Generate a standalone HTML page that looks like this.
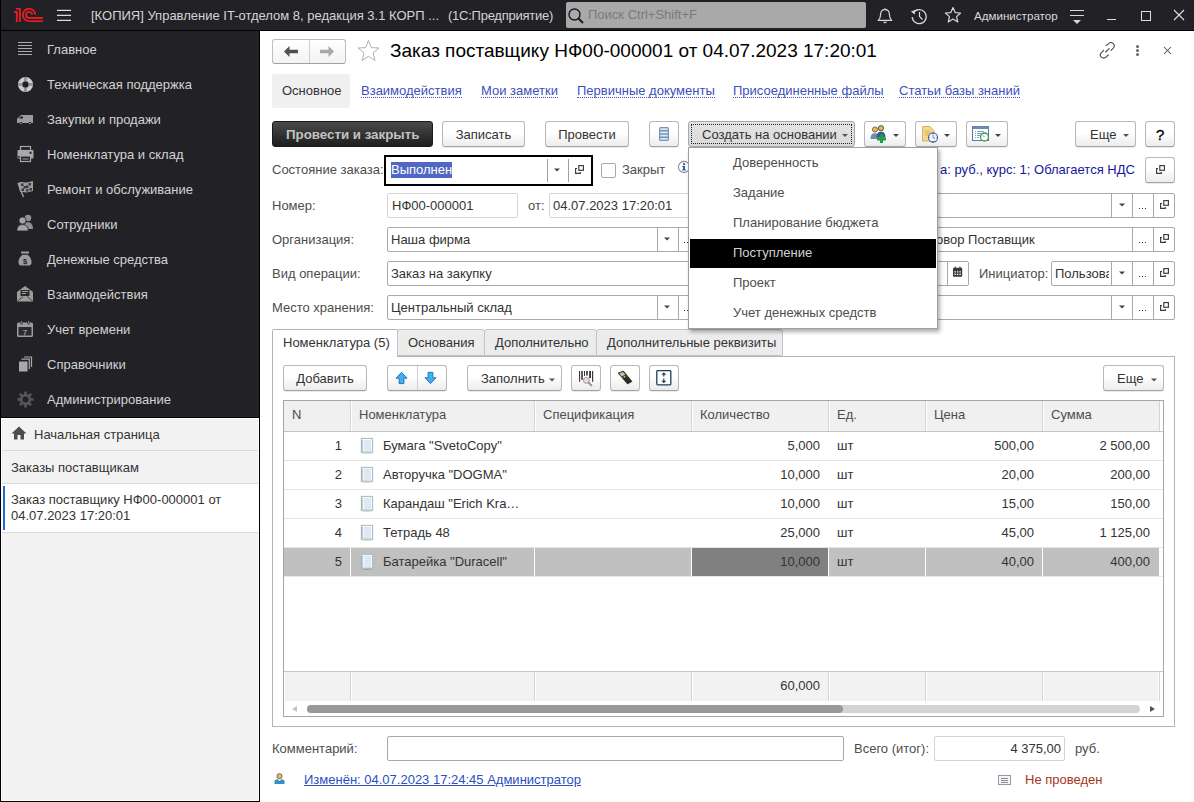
<!DOCTYPE html>
<html><head><meta charset="utf-8">
<style>
*{box-sizing:border-box;margin:0;padding:0}
html,body{width:1194px;height:802px;overflow:hidden;background:#fff;font-family:"Liberation Sans",sans-serif;font-size:13px;color:#333}
.a{position:absolute}
.t{position:absolute;white-space:nowrap;line-height:16px}
#top{left:0;top:0;width:1194px;height:30px;background:#222226}
#nav{left:0;top:31px;width:259px;height:386px;background:#222226}
.ni{position:absolute;left:47px;color:#d2d2d2;font-size:13px;white-space:nowrap;line-height:16px}
.lnk{display:inline-block;height:15px;color:#3b4fbd;border-bottom:1px dotted #3b4fbd}
.btn{position:absolute;height:26px;border:1px solid #b8b8b8;border-bottom-color:#a2a2a2;border-radius:3px;background:linear-gradient(#fff 45%,#ececec);box-shadow:0 1px 0 rgba(0,0,0,.08);color:#333;text-align:center;line-height:25px;white-space:nowrap}
.fld{position:absolute;height:24px;border:1px solid #a9a9a9;border-radius:2px;background:#fff}
.lbl{position:absolute;color:#4d4d4d;white-space:nowrap;line-height:16px}
</style></head><body>
<!-- frame -->
<div id="top" class="a"></div>
<div class="a" style="left:0;top:30px;width:1194px;height:1px;background:#000"></div>
<div id="nav" class="a"></div>
<div class="a" style="left:0;top:0;width:1px;height:802px;background:#000"></div>
<div class="a" style="left:259px;top:31px;width:1px;height:771px;background:#000"></div>
<div class="a" style="left:0;top:417px;width:260px;height:1px;background:#000"></div>
<div class="a" style="left:0;top:801px;width:260px;height:1px;background:#000"></div>
<div class="a" style="left:1px;top:418px;width:258px;height:383px;background:#fff"></div>
<div class="a" style="left:2px;top:419px;width:256px;height:381px;background:#f2f2f2"></div>

<!-- top bar content -->
<svg class="a" style="left:0;top:0" width="50" height="30" viewBox="0 0 50 30">
 <g fill="none" stroke="#e31b23" stroke-width="1.9" stroke-linejoin="miter" stroke-linecap="butt">
  <path d="M14 11.95 H16.85 V22.1"/>
  <path d="M15.9 8.85 H19.9 V22.1"/>
  <path d="M35.25 14.6 A6.2 6.2 0 1 0 29.05 21.15 H43"/>
  <path d="M32.1 14.6 A3.05 3.05 0 1 0 29.05 17.95 H43"/>
 </g>
</svg>
<svg class="a" style="left:0;top:0" width="80" height="30" viewBox="0 0 80 30"><path d="M57 10.4 H71 M57 15.35 H71 M57 20.35 H71" stroke="#dcdcdc" stroke-width="1.4"/></svg>
<div class="t" style="left:91px;top:8px;color:#d4d4d4;font-size:13px">[КОПИЯ] Управление IT-отделом 8, редакция 3.1 КОРП ...</div><div class="t" style="left:448px;top:8px;color:#d4d4d4;font-size:13px;letter-spacing:-0.25px">(1С:Предприятие)</div>
<div class="a" style="left:566px;top:2px;width:300px;height:26px;background:#a9a9a9;border-radius:2px"></div>
<svg class="a" style="left:568px;top:8px" width="17" height="16" viewBox="0 0 17 16"><circle cx="6.5" cy="6.5" r="5.5" fill="none" stroke="#1a1a1a" stroke-width="1.4"/><path d="M10.5 10.5 L15 15" stroke="#1a1a1a" stroke-width="2"/></svg>
<div class="t" style="left:588px;top:7px;color:#7a7a7a;font-size:13px">Поиск Ctrl+Shift+F</div>
<!-- bell -->
<svg class="a" style="left:876px;top:7px" width="18" height="18" viewBox="0 0 18 18"><path d="M9 1.2 V2.4" stroke="#d8d8d8" stroke-width="1.2"/><path d="M2.2 13.4 C3.8 12 4.6 10.8 4.6 7.6 C4.6 4.4 6.4 2.6 9 2.6 C11.6 2.6 13.4 4.4 13.4 7.6 C13.4 10.8 14.2 12 15.8 13.4 Z" fill="none" stroke="#d8d8d8" stroke-width="1.2" stroke-linejoin="round"/><path d="M6.6 14.8 H11.4 L9 16.4 Z" fill="#d8d8d8"/></svg>
<!-- history -->
<svg class="a" style="left:910px;top:7px" width="18" height="18" viewBox="0 0 18 18"><path d="M3.2 6 A7 7 0 1 1 2.2 10" fill="none" stroke="#d8d8d8" stroke-width="1.3"/><path d="M0.8 4.5 L4.8 7.5 L5.2 3 Z" fill="#d8d8d8"/><path d="M9.5 5 V9.5 L12.5 12.5" fill="none" stroke="#d8d8d8" stroke-width="1.2"/></svg>
<!-- star -->
<svg class="a" style="left:944px;top:6px" width="18" height="18" viewBox="0 0 18 18"><path d="M9 1.5 L11.2 6.6 L16.6 7 L12.5 10.6 L13.8 16 L9 13.1 L4.2 16 L5.5 10.6 L1.4 7 L6.8 6.6 Z" fill="none" stroke="#d8d8d8" stroke-width="1.2" stroke-linejoin="round"/></svg>
<div class="t" style="left:974px;top:8px;color:#d8d8d8;font-size:11.6px">Администратор</div>
<div class="a" style="left:1070px;top:10px;width:14px;height:1px;background:#d8d8d8"></div>
<div class="a" style="left:1070px;top:15px;width:14px;height:1px;background:#d8d8d8"></div>
<svg class="a" style="left:1073px;top:20px" width="8" height="4" viewBox="0 0 8 4"><path d="M0 0 H8 L4 4 Z" fill="#d8d8d8"/></svg>
<div class="a" style="left:1107px;top:19px;width:9px;height:1px;background:#e0e0e0"></div>
<div class="a" style="left:1141px;top:11px;width:10px;height:10px;border:1px solid #e0e0e0"></div>
<svg class="a" style="left:1173px;top:9px" width="12" height="12" viewBox="0 0 12 12"><path d="M1 1 L11 11 M11 1 L1 11" stroke="#e0e0e0" stroke-width="1.1"/></svg>

<!-- nav items -->
<div class="ni" style="top:42px">Главное</div>
<div class="ni" style="top:77px">Техническая поддержка</div>
<div class="ni" style="top:112px">Закупки и продажи</div>
<div class="ni" style="top:147px">Номенклатура и склад</div>
<div class="ni" style="top:182px">Ремонт и обслуживание</div>
<div class="ni" style="top:217px">Сотрудники</div>
<div class="ni" style="top:252px">Денежные средства</div>
<div class="ni" style="top:287px">Взаимодействия</div>
<div class="ni" style="top:322px">Учет времени</div>
<div class="ni" style="top:357px">Справочники</div>
<div class="ni" style="top:392px">Администрирование</div>

<!-- nav icons -->
<svg class="a" style="left:17px;top:41px" width="16" height="15" viewBox="0 0 16 15"><path d="M1 1.5 H15 M1 4.5 H15 M1 7.5 H15 M1 10.5 H15 M1 13.5 H15" stroke="#ababab" stroke-width="1"/></svg>
<svg class="a" style="left:17px;top:76px" width="17" height="17" viewBox="0 0 17 17"><circle cx="8.5" cy="8.5" r="5.4" fill="none" stroke="#cdcdcd" stroke-width="4.4"/><path d="M7 1 H10 V5 H7 Z M7 12 H10 V16 H7 Z M1 7 H5 V10 H1 Z M12 7 H16 V10 H12 Z" fill="#959595"/></svg>
<svg class="a" style="left:16px;top:113px" width="18" height="12" viewBox="0 0 18 12"><path d="M1 6 L5 2 H17 V10 H1 Z" fill="#9c9c9c"/><path d="M4.5 3.5 H7 V5.5 H3 Z" fill="#222226"/><circle cx="5" cy="10.5" r="1.4" fill="#222226"/><circle cx="14" cy="10.5" r="1.4" fill="#222226"/><circle cx="5" cy="10.5" r="0.8" fill="#9c9c9c"/><circle cx="14" cy="10.5" r="0.8" fill="#9c9c9c"/></svg>
<svg class="a" style="left:17px;top:145px" width="17" height="18" viewBox="0 0 17 18"><rect x="3.5" y="1.5" width="10" height="4" fill="none" stroke="#a8a8a8" stroke-width="1.2"/><rect x="0.5" y="5" width="16" height="8.5" rx="1" fill="#a8a8a8"/><rect x="3.5" y="11" width="10" height="5.5" fill="#222226" stroke="#a8a8a8" stroke-width="1.2"/><path d="M5.5 14 H11.5" stroke="#a8a8a8" stroke-width="1"/><rect x="12.5" y="6.8" width="2" height="2" fill="#222226"/><rect x="1.2" y="11" width="1.6" height="1.6" fill="#222226"/></svg>
<svg class="a" style="left:17px;top:180px" width="17" height="18" viewBox="0 0 17 18"><path d="M1 3 C4 1 6 2.5 9 2.5 C11 2.5 13 1.5 16 1 V11 C13 11.5 11 12.5 9 12.5 C6 12.5 4.5 11.5 3 12 Z" fill="#9c9c9c"/><path d="M1 3 L6.5 17" stroke="#9c9c9c" stroke-width="1.5"/><path d="M4 3.5 h2.5 v2.5 h-2.5 Z M9 5.5 h2.5 v2.5 h-2.5 Z M6.5 6 h2.5 v2.5 h-2.5 Z M4.5 8.5 h2.5 v2.5 h-2.5 Z M11.5 3 h2.5 v2.5 h-2.5 Z M9 9 h2.5 v2.5 h-2.5 Z M12.5 8 h2.5 v2.5 h-2.5 Z" fill="#3a3a3e"/></svg>
<svg class="a" style="left:16px;top:214px" width="18" height="18" viewBox="0 0 18 18"><circle cx="12" cy="4" r="3.3" fill="#8e8e8e"/><path d="M8 15 C8 10 9.5 8.3 12 8.3 C14.5 8.3 17 10 17 15 Z" fill="#8e8e8e"/><circle cx="6.5" cy="6.5" r="3.6" fill="#a4a4a4" stroke="#222226" stroke-width="0.8"/><path d="M0.8 17 C0.8 12.5 3 10.6 6.5 10.6 C10 10.6 12.2 12.5 12.2 17 Z" fill="#a4a4a4" stroke="#222226" stroke-width="0.8"/></svg>
<svg class="a" style="left:18px;top:251px" width="14" height="15" viewBox="0 0 14 15"><rect x="3" y="0.5" width="8" height="2" fill="#9c9c9c"/><path d="M4.5 3.8 H9.5 C13 6.5 13.5 9 13.5 11.5 C13.5 13.5 12.5 14.5 11 14.5 H3 C1.5 14.5 0.5 13.5 0.5 11.5 C0.5 9 1 6.5 4.5 3.8 Z" fill="#9c9c9c"/><text x="7" y="12.5" font-size="7.5" font-family="Liberation Sans" text-anchor="middle" fill="#222226" font-weight="bold">$</text></svg>
<svg class="a" style="left:16px;top:285px" width="18" height="18" viewBox="0 0 18 18"><path d="M1 7 L9 1 L17 7 V16.5 H1 Z" fill="#9c9c9c"/><rect x="4.5" y="5" width="9" height="6" fill="#2e2e32"/><path d="M6 6.5 H12 M6 8.5 H10" stroke="#9c9c9c" stroke-width="1"/><path d="M1.5 16 L7 11.5 M16.5 16 L11 11.5" stroke="#2e2e32" stroke-width="0.8"/></svg>
<svg class="a" style="left:16px;top:320px" width="18" height="18" viewBox="0 0 18 18"><rect x="1" y="2.5" width="16" height="14.5" rx="1.5" fill="#9c9c9c"/><rect x="2.5" y="7" width="13" height="8.5" fill="#2a2a2e"/><path d="M5.5 1 V4.5 M12.5 1 V4.5" stroke="#2a2a2e" stroke-width="1.8"/><path d="M5.5 1 V3.5 M12.5 1 V3.5" stroke="#9c9c9c" stroke-width="0.8"/><text x="9" y="14.8" font-size="8" font-family="Liberation Sans" text-anchor="middle" fill="#9c9c9c" font-weight="bold">7</text></svg>
<svg class="a" style="left:18px;top:356px" width="15" height="16" viewBox="0 0 15 16"><path d="M6 1 H13.5 V11" fill="none" stroke="#a8a8a8" stroke-width="1.2"/><path d="M3.5 3.2 H11.3 V13.3" fill="none" stroke="#a8a8a8" stroke-width="1.2"/><rect x="1" y="5.5" width="8.5" height="10" fill="#a8a8a8"/></svg>
<svg class="a" style="left:17px;top:391px" width="17" height="17" viewBox="0 0 17 17"><g fill="#585858"><circle cx="8.5" cy="8.5" r="5.5"/><rect x="7.2" y="0.5" width="2.6" height="16" rx="0.5"/><rect x="0.5" y="7.2" width="16" height="2.6" rx="0.5"/><rect x="7.2" y="0.5" width="2.6" height="16" rx="0.5" transform="rotate(45 8.5 8.5)"/><rect x="7.2" y="0.5" width="2.6" height="16" rx="0.5" transform="rotate(-45 8.5 8.5)"/></g><circle cx="8.5" cy="8.5" r="3" fill="#222226"/></svg>

<!-- lower left panel -->
<svg class="a" style="left:11px;top:426px" width="16" height="14" viewBox="0 0 16 14"><path d="M0.5 7.5 L8 0.5 L15.5 7.5 H13 V13.5 H9.5 V9 H6.5 V13.5 H3 V7.5 Z" fill="#4d4d4d"/></svg>
<div class="t" style="left:34px;top:427px;color:#333">Начальная страница</div>
<div class="a" style="left:2px;top:450px;width:256px;height:1px;background:#d9d9d9"></div>
<div class="t" style="left:11px;top:460px;color:#333">Заказы поставщикам</div>
<div class="a" style="left:2px;top:483px;width:256px;height:1px;background:#d9d9d9"></div>
<div class="a" style="left:2px;top:484px;width:256px;height:48px;background:#fff"></div>
<div class="a" style="left:3px;top:486px;width:2px;height:44px;background:#1d6fcf"></div>
<div class="t" style="left:11px;top:492px;color:#333">Заказ поставщику НФ00-000001 от</div>
<div class="t" style="left:11px;top:508px;color:#333">04.07.2023 17:20:01</div>
<div class="a" style="left:2px;top:532px;width:256px;height:1px;background:#d9d9d9"></div>


<!-- form header -->
<div class="a" style="left:272px;top:39px;width:74px;height:25px;border:1px solid #bdbdbd;border-bottom-color:#a0a0a0;border-radius:3px;background:linear-gradient(#fff,#f3f3f3)"></div>
<div class="a" style="left:309px;top:40px;width:1px;height:23px;background:#d0d0d0"></div>
<svg class="a" style="left:284px;top:46px" width="15" height="11" viewBox="0 0 15 11"><path d="M0 5.5 L5.5 0 V3.8 H14 V7.2 H5.5 V11 Z" fill="#505050"/></svg>
<svg class="a" style="left:320px;top:46px" width="15" height="11" viewBox="0 0 15 11"><path d="M14 5.5 L8.5 0 V3.8 H0 V7.2 H8.5 V11 Z" fill="#a8a8a8"/></svg>
<svg class="a" style="left:356px;top:39px" width="25" height="24" viewBox="0 0 25 24"><path d="M12.5 1.5 L15.3 8.6 L23 9 L17 13.9 L19 21.5 L12.5 17.3 L6 21.5 L8 13.9 L2 9 L9.7 8.6 Z" fill="none" stroke="#a9b1ba" stroke-width="1" stroke-linejoin="miter"/></svg>
<div class="t" style="left:390px;top:40px;font-size:19px;line-height:22px;color:#000">Заказ поставщику НФ00-000001 от 04.07.2023 17:20:01</div>
<svg class="a" style="left:1099px;top:42px" width="17" height="17" viewBox="0 0 17 17"><g fill="none" stroke="#505050" stroke-width="1.15" stroke-linecap="round"><path d="M7.2 3.6 L9.6 1.6 A2.9 2.9 0 0 1 14.2 6.2 L12 8.4"/><path d="M9.4 13.0 L7.0 15.2 A2.9 2.9 0 0 1 2.4 10.6 L4.6 8.4"/><path d="M6.6 10.0 L10.2 6.6"/></g></svg>
<div class="a" style="left:1136px;top:45px;width:3px;height:3px;border-radius:2px;background:#666"></div>
<div class="a" style="left:1136px;top:49px;width:3px;height:3px;border-radius:2px;background:#666"></div>
<div class="a" style="left:1136px;top:53px;width:3px;height:3px;border-radius:2px;background:#666"></div>
<svg class="a" style="left:1163px;top:46px" width="9" height="9" viewBox="0 0 9 9"><path d="M1 1 L8 8 M8 1 L1 8" stroke="#555" stroke-width="1.05"/></svg>

<!-- tabs row -->
<div class="a" style="left:272px;top:74px;width:78px;height:34px;background:#f0f0f0;border-radius:3px"></div>
<div class="t" style="left:282px;top:83px;color:#333">Основное</div>
<div class="t" style="left:361px;top:83px"><span class="lnk">Взаимодействия</span></div>
<div class="t" style="left:481px;top:83px"><span class="lnk">Мои заметки</span></div>
<div class="t" style="left:577px;top:83px"><span class="lnk">Первичные документы</span></div>
<div class="t" style="left:733px;top:83px"><span class="lnk">Присоединенные файлы</span></div>
<div class="t" style="left:899px;top:83px"><span class="lnk">Статьи базы знаний</span></div>

<!-- toolbar -->
<div class="a" style="left:272px;top:121px;width:161px;height:26px;border:1px solid #1a1a1a;border-radius:3px;background:linear-gradient(#4a4a4a,#1e1e1e)"></div>
<div class="t" style="left:286px;top:127px;font-weight:bold;font-size:13.3px;color:#c2c2c2">Провести и закрыть</div>
<div class="btn" style="left:442px;top:121px;width:83px">Записать</div>
<div class="btn" style="left:545px;top:121px;width:84px">Провести</div>
<div class="btn" style="left:649px;top:121px;width:30px"></div>
<svg class="a" style="left:648px;top:120px" width="32" height="28" viewBox="648 120 32 28"><rect x="659" y="127" width="10" height="14" rx="1.6" fill="#7896b4"/><g fill="#d6e7f5"><rect x="660.2" y="128.3" width="7.6" height="1.8" rx="0.5"/><rect x="660.2" y="131.5" width="7.6" height="1.8" rx="0.5"/><rect x="660.2" y="134.7" width="7.6" height="1.8" rx="0.5"/><rect x="660.2" y="137.9" width="7.6" height="1.8" rx="0.5"/></g></svg>
<div class="a" style="left:688px;top:121px;width:167px;height:26px;border:1px solid #a8a8a8;border-radius:3px;background:linear-gradient(#e4e4e4,#d9d9d9)"></div>
<div class="a" style="left:691px;top:124px;width:161px;height:20px;border:1px dotted #222"></div>
<div class="t" style="left:702px;top:127px;color:#333">Создать на основании</div>
<svg class="a" style="left:842px;top:134px" width="6" height="3" viewBox="0 0 6 3"><path d="M0 0 H6 L3 3 Z" fill="#555"/></svg>

<div class="btn" style="left:864px;top:121px;width:42px"></div>
<svg class="a" style="left:870px;top:125px" width="18" height="18" viewBox="0 0 18 18">
 <circle cx="5" cy="4.5" r="2.6" fill="#e8b75a" stroke="#7a4a20" stroke-width="0.8"/>
 <path d="M0.5 14 C0.5 9.5 2.5 8.3 5 8.3 C7.5 8.3 9 9.5 9 14 Z" fill="#6f8fb0"/>
 <circle cx="11" cy="3.2" r="2.6" fill="#e8b75a" stroke="#1f3550" stroke-width="0.8"/>
 <path d="M6.5 12.5 C6.5 8 8.5 6.8 11 6.8 C13.5 6.8 15.5 8 15.5 12.5 Z" fill="#3d5a80"/>
 <path d="M10 9.5 H13 V12.5 H16 V15.5 H13 V18 H10 V15.5 H7 V12.5 H10 Z" fill="#1aa04a"/>
</svg>
<svg class="a" style="left:893px;top:134px" width="6" height="3" viewBox="0 0 6 3"><path d="M0 0 H6 L3 3 Z" fill="#444"/></svg>
<div class="btn" style="left:915px;top:121px;width:42px"></div>
<svg class="a" style="left:922px;top:126px" width="17" height="17" viewBox="0 0 17 17">
 <path d="M0.5 0.5 H8 L12 4.5 V15 H0.5 Z" fill="#f3d98a" stroke="#c9a64a" stroke-width="0.8"/>
 <path d="M2.5 5 H8 M2.5 7 H8 M2.5 9 H6" stroke="#c9a64a" stroke-width="0.7"/>
 <circle cx="11" cy="11.5" r="4.6" fill="#eef3fb" stroke="#3a6db0" stroke-width="1.1"/>
 <path d="M11 8.5 V11.5 L13 12.5" stroke="#3a6db0" stroke-width="0.8" fill="none"/>
 <circle cx="11" cy="7.3" r="0.8" fill="#e03030"/><circle cx="11" cy="15.7" r="0.8" fill="#e03030"/><circle cx="6.8" cy="11.5" r="0.8" fill="#e03030"/><circle cx="15.2" cy="11.5" r="0.8" fill="#e03030"/>
</svg>
<svg class="a" style="left:944px;top:134px" width="6" height="3" viewBox="0 0 6 3"><path d="M0 0 H6 L3 3 Z" fill="#444"/></svg>
<div class="btn" style="left:966px;top:121px;width:42px"></div>
<svg class="a" style="left:972px;top:126px" width="18" height="16" viewBox="0 0 18 16">
 <rect x="0.5" y="0.5" width="16" height="14" fill="#fff" stroke="#5a7aa0" stroke-width="1"/>
 <rect x="0.5" y="0.5" width="16" height="2.5" fill="#6d8cb4"/>
 <path d="M3 5.5 H4 M5 5.5 H12 M3 7.5 H4 M5 7.5 H10 M3 9.5 H4 M5 9.5 H8 M3 11.5 H4 M5 11.5 H7" stroke="#6a9ad0" stroke-width="0.9"/>
 <circle cx="12.5" cy="11" r="4" fill="#fff" stroke="#3a9a50" stroke-width="1.3"/>
 <path d="M11 9.5 L12.5 11" stroke="#555" stroke-width="0.8"/>
</svg>
<svg class="a" style="left:995px;top:134px" width="6" height="3" viewBox="0 0 6 3"><path d="M0 0 H6 L3 3 Z" fill="#444"/></svg>
<div class="btn" style="left:1075px;top:121px;width:61px;text-align:left;padding-left:14px">Еще</div>
<svg class="a" style="left:1123px;top:134px" width="6" height="3" viewBox="0 0 6 3"><path d="M0 0 H6 L3 3 Z" fill="#555"/></svg>
<div class="btn" style="left:1145px;top:121px;width:30px"></div><div class="t" style="left:1145px;top:126px;width:30px;text-align:center;font-size:15.5px;line-height:18px;color:#000;-webkit-text-stroke:0.3px #000">?</div>


<!-- fields -->
<div class="lbl" style="left:272px;top:162px">Состояние заказа:</div>
<div class="a" style="left:384px;top:155px;width:209px;height:31px;border:2px solid #000;background:#fff"></div>
<div class="a" style="left:391px;top:162px;width:61px;height:16px;background:#5068c4"></div>
<div class="t" style="left:391px;top:162px;color:#fff">Выполнен</div>
<div class="a" style="left:547px;top:159px;width:1px;height:23px;background:#a0a0a0"></div><div class="a" style="left:568px;top:159px;width:1px;height:23px;background:#a0a0a0"></div>
<svg class="a" style="left:554px;top:168px" width="6" height="4" viewBox="0 0 6 4"><path d="M0 0.5 H6 L3 3.5 Z" fill="#444"/></svg>
<svg class="a" style="left:575px;top:165px" width="10" height="10" viewBox="0 0 10 10"><rect x="3.8" y="0.6" width="4.6" height="4.7" fill="none" stroke="#3a3a3a" stroke-width="1.15"/><path d="M2 3.5 H0.6 V8.3 H5.3 V7.1" fill="none" stroke="#3a3a3a" stroke-width="1.15"/></svg>
<div class="a" style="left:601px;top:163px;width:15px;height:15px;border:1px solid #a8a8a8;border-radius:2px;background:#fff"></div>
<div class="t" style="left:622px;top:162px;color:#4d4d4d">Закрыт</div>
<svg class="a" style="left:677px;top:160px" width="14" height="14" viewBox="0 0 14 14"><circle cx="7" cy="7" r="5.6" fill="#fff" stroke="#8a8a8a" stroke-width="1.1"/><rect x="6" y="3.2" width="2" height="1.8" fill="#1f5fa8"/><path d="M5.2 6 H8 V9.6 H8.9 V10.6 H5.2 V9.6 H6.1 V7 H5.2 Z" fill="#1f5fa8"/></svg>
<div class="t" style="left:940px;top:162px;color:#16169a">а: руб., курс: 1; Облагается НДС</div>
<div class="btn" style="left:1145px;top:157px;width:30px;height:26px"></div>
<svg class="a" style="left:1156px;top:165px" width="10" height="10" viewBox="0 0 10 10"><rect x="3.8" y="0.6" width="4.6" height="4.7" fill="none" stroke="#3a3a3a" stroke-width="1.15"/><path d="M2 3.5 H0.6 V8.3 H5.3 V7.1" fill="none" stroke="#3a3a3a" stroke-width="1.15"/></svg>

<div class="lbl" style="left:272px;top:198px">Номер:</div>
<div class="fld" style="left:387px;top:193px;width:131px;height:25px;border-color:#d4d4d4"></div>
<div class="t" style="left:392px;top:198px;color:#333">НФ00-000001</div>
<div class="lbl" style="left:528px;top:198px">от:</div>
<div class="fld" style="left:549px;top:193px;width:625px;height:25px;border-color:#d4d4d4"></div>
<div class="t" style="left:553px;top:198px;color:#333">04.07.2023 17:20:01</div>
<div class="fld" style="left:688px;top:193px;width:487px;height:25px"></div>
<div class="a" style="left:1111px;top:193px;width:1px;height:25px;background:#a8a8a8"></div><div class="a" style="left:1132px;top:193px;width:1px;height:25px;background:#a8a8a8"></div><div class="a" style="left:1153px;top:193px;width:1px;height:25px;background:#a8a8a8"></div>
<svg class="a" style="left:1119px;top:203px" width="6" height="4" viewBox="0 0 6 4"><path d="M0 0.5 H6 L3 3.5 Z" fill="#444"/></svg><div class="a" style="left:1139px;top:208px;width:8px;height:1px;background:repeating-linear-gradient(90deg,#333 0 1px,transparent 1px 3px)"></div><svg class="a" style="left:1160px;top:200px" width="10" height="10" viewBox="0 0 10 10"><rect x="3.8" y="0.6" width="4.6" height="4.7" fill="none" stroke="#3a3a3a" stroke-width="1.15"/><path d="M2 3.5 H0.6 V8.3 H5.3 V7.1" fill="none" stroke="#3a3a3a" stroke-width="1.15"/></svg>

<div class="lbl" style="left:272px;top:232px">Организация:</div>
<div class="fld" style="left:387px;top:227px;width:320px;height:25px"></div>
<div class="t" style="left:391px;top:232px;color:#333">Наша фирма</div>
<div class="a" style="left:657px;top:227px;width:1px;height:25px;background:#a8a8a8"></div><div class="a" style="left:678px;top:227px;width:1px;height:25px;background:#a8a8a8"></div>
<svg class="a" style="left:664px;top:237px" width="6" height="4" viewBox="0 0 6 4"><path d="M0 0.5 H6 L3 3.5 Z" fill="#444"/></svg><div class="a" style="left:684px;top:242px;width:8px;height:1px;background:repeating-linear-gradient(90deg,#333 0 1px,transparent 1px 3px)"></div>
<div class="fld" style="left:700px;top:227px;width:475px;height:25px"></div>
<div class="t" style="left:936px;top:232px;color:#333">овор Поставщик</div>
<div class="a" style="left:1132px;top:227px;width:1px;height:25px;background:#a8a8a8"></div><div class="a" style="left:1153px;top:227px;width:1px;height:25px;background:#a8a8a8"></div>
<div class="a" style="left:1139px;top:242px;width:8px;height:1px;background:repeating-linear-gradient(90deg,#333 0 1px,transparent 1px 3px)"></div><svg class="a" style="left:1160px;top:234px" width="10" height="10" viewBox="0 0 10 10"><rect x="3.8" y="0.6" width="4.6" height="4.7" fill="none" stroke="#3a3a3a" stroke-width="1.15"/><path d="M2 3.5 H0.6 V8.3 H5.3 V7.1" fill="none" stroke="#3a3a3a" stroke-width="1.15"/></svg>

<div class="lbl" style="left:272px;top:266px">Вид операции:</div>
<div class="fld" style="left:387px;top:261px;width:582px;height:25px"></div>
<div class="t" style="left:391px;top:266px;color:#333">Заказ на закупку</div>
<div class="a" style="left:947px;top:261px;width:1px;height:25px;background:#a8a8a8"></div>
<svg class="a" style="left:952px;top:266px" width="12" height="12" viewBox="0 0 12 12"><rect x="1" y="1.8" width="9.2" height="9" rx="1" fill="#3a3a3a"/><rect x="2.6" y="0.6" width="1.2" height="2" fill="#3a3a3a"/><rect x="7.4" y="0.6" width="1.2" height="2" fill="#3a3a3a"/><g fill="#fff"><rect x="2.4" y="5.2" width="1.4" height="1.3"/><rect x="4.9" y="5.2" width="1.4" height="1.3"/><rect x="7.4" y="5.2" width="1.4" height="1.3"/><rect x="2.4" y="7.7" width="1.4" height="1.3"/><rect x="4.9" y="7.7" width="1.4" height="1.3"/><rect x="7.4" y="7.7" width="1.4" height="1.3"/></g></svg>
<div class="lbl" style="left:979px;top:266px">Инициатор:</div>
<div class="fld" style="left:1051px;top:261px;width:124px;height:25px"></div>
<div class="t" style="left:1055px;top:266px;color:#333;width:54px;overflow:hidden">Пользователь</div>
<div class="a" style="left:1111px;top:261px;width:1px;height:25px;background:#a8a8a8"></div><div class="a" style="left:1132px;top:261px;width:1px;height:25px;background:#a8a8a8"></div><div class="a" style="left:1153px;top:261px;width:1px;height:25px;background:#a8a8a8"></div>
<svg class="a" style="left:1119px;top:271px" width="6" height="4" viewBox="0 0 6 4"><path d="M0 0.5 H6 L3 3.5 Z" fill="#444"/></svg><div class="a" style="left:1139px;top:276px;width:8px;height:1px;background:repeating-linear-gradient(90deg,#333 0 1px,transparent 1px 3px)"></div><svg class="a" style="left:1160px;top:268px" width="10" height="10" viewBox="0 0 10 10"><rect x="3.8" y="0.6" width="4.6" height="4.7" fill="none" stroke="#3a3a3a" stroke-width="1.15"/><path d="M2 3.5 H0.6 V8.3 H5.3 V7.1" fill="none" stroke="#3a3a3a" stroke-width="1.15"/></svg>

<div class="lbl" style="left:272px;top:300px">Место хранения:</div>
<div class="fld" style="left:387px;top:295px;width:320px;height:25px"></div>
<div class="t" style="left:391px;top:300px;color:#333">Центральный склад</div>
<div class="a" style="left:657px;top:295px;width:1px;height:25px;background:#a8a8a8"></div><div class="a" style="left:678px;top:295px;width:1px;height:25px;background:#a8a8a8"></div>
<svg class="a" style="left:664px;top:305px" width="6" height="4" viewBox="0 0 6 4"><path d="M0 0.5 H6 L3 3.5 Z" fill="#444"/></svg><div class="a" style="left:684px;top:310px;width:8px;height:1px;background:repeating-linear-gradient(90deg,#333 0 1px,transparent 1px 3px)"></div>
<div class="fld" style="left:700px;top:295px;width:475px;height:25px"></div>
<div class="a" style="left:1111px;top:295px;width:1px;height:25px;background:#a8a8a8"></div><div class="a" style="left:1132px;top:295px;width:1px;height:25px;background:#a8a8a8"></div><div class="a" style="left:1153px;top:295px;width:1px;height:25px;background:#a8a8a8"></div>
<svg class="a" style="left:1119px;top:305px" width="6" height="4" viewBox="0 0 6 4"><path d="M0 0.5 H6 L3 3.5 Z" fill="#444"/></svg><div class="a" style="left:1139px;top:310px;width:8px;height:1px;background:repeating-linear-gradient(90deg,#333 0 1px,transparent 1px 3px)"></div><svg class="a" style="left:1160px;top:302px" width="10" height="10" viewBox="0 0 10 10"><rect x="3.8" y="0.6" width="4.6" height="4.7" fill="none" stroke="#3a3a3a" stroke-width="1.15"/><path d="M2 3.5 H0.6 V8.3 H5.3 V7.1" fill="none" stroke="#3a3a3a" stroke-width="1.15"/></svg>

<!-- tab panel -->
<div class="a" style="left:272px;top:356px;width:903px;height:371px;border:1px solid #b4b4b4;background:#fff"></div>
<div class="a" style="left:272px;top:329px;width:126px;height:28px;border:1px solid #b4b4b4;border-bottom:none;background:#fff;border-radius:2px 2px 0 0"></div>
<div class="a" style="left:397px;top:329px;width:88px;height:27px;border:1px solid #c4c4c4;border-radius:3px 3px 0 0;background:#ececec"></div>
<div class="a" style="left:484px;top:329px;width:113px;height:27px;border:1px solid #c4c4c4;border-radius:3px 3px 0 0;background:#ececec"></div>
<div class="a" style="left:596px;top:329px;width:187px;height:27px;border:1px solid #c4c4c4;border-radius:3px 3px 0 0;background:#ececec"></div>
<div class="t" style="left:283px;top:335px;color:#333">Номенклатура (5)</div>
<div class="t" style="left:408px;top:335px;color:#333">Основания</div>
<div class="t" style="left:495px;top:335px;color:#333">Дополнительно</div>
<div class="t" style="left:607px;top:335px;color:#333">Дополнительные реквизиты</div>

<!-- table toolbar -->
<div class="btn" style="left:283px;top:365px;width:84px">Добавить</div>
<div class="btn" style="left:387px;top:365px;width:60px"></div>
<div class="a" style="left:417px;top:366px;width:1px;height:24px;background:#d0d0d0"></div>
<svg class="a" style="left:384px;top:362px" width="66" height="32" viewBox="384 362 66 32"><path d="M401.5 372.3 L407 378.2 H403.9 V383.6 H399.1 V378.2 H396 Z" fill="#43b0ee" stroke="#1c6ea6" stroke-width="0.9" stroke-linejoin="miter"/><path d="M430.5 383.6 L436 377.7 H432.9 V372.3 H428.1 V377.7 H425 Z" fill="#43b0ee" stroke="#1c6ea6" stroke-width="0.9" stroke-linejoin="miter"/></svg>
<div class="btn" style="left:467px;top:365px;width:95px;text-align:left;padding-left:13px">Заполнить</div>
<svg class="a" style="left:549px;top:378px" width="6" height="4" viewBox="0 0 6 4"><path d="M0 0.5 H6 L3 3.5 Z" fill="#555"/></svg>
<div class="btn" style="left:571px;top:365px;width:30px"></div>
<svg class="a" style="left:574px;top:366px" width="26" height="24" viewBox="0 0 26 24"><g fill="#3a3a3a"><rect x="5" y="5" width="1.1" height="10.8"/><rect x="7.2" y="5" width="1.6" height="8.8"/><rect x="10" y="5" width="1" height="5"/><rect x="12.1" y="5" width="1.7" height="4.5"/><rect x="15.1" y="5" width="1.9" height="7"/><rect x="18" y="5" width="1.2" height="10.8"/></g><circle cx="12.4" cy="14.4" r="3" fill="#cfe0f8" stroke="#b88a68" stroke-width="0.9"/><path d="M14.6 16.6 L17.4 19.4" stroke="#b88a68" stroke-width="2" stroke-linecap="round"/></svg>
<div class="btn" style="left:610px;top:365px;width:30px"></div>
<svg class="a" style="left:612px;top:366px" width="24" height="24" viewBox="0 0 24 24"><path d="M6 7 L11.5 5 L20 15.5 L15.5 18 Z" fill="#2f2a24" stroke="#1c1812" stroke-width="0.6" stroke-linejoin="round"/><path d="M7.2 7.2 L11 5.9 L13.5 8.8 L9.6 10.4 Z" fill="#c8c0a8"/><circle cx="12.5" cy="10.8" r="0.9" fill="#f0c020"/><circle cx="10.8" cy="11.6" r="0.6" fill="#50a0d0"/><circle cx="14.1" cy="10" r="0.6" fill="#50a0d0"/></svg>
<div class="btn" style="left:649px;top:365px;width:30px"></div>
<svg class="a" style="left:652px;top:366px" width="24" height="24" viewBox="0 0 24 24"><rect x="4.8" y="4.6" width="14" height="14.2" rx="0.8" fill="#fff" stroke="#1f3d5c" stroke-width="1.3"/><path d="M11.8 6.2 L14.3 8.7 H9.3 Z M11.8 17.2 L14.3 14.7 H9.3 Z" fill="#1f3d5c"/><path d="M11.8 8.5 V10.6 M11.8 12.6 V14.9" stroke="#1f3d5c" stroke-width="1.2"/></svg>
<div class="btn" style="left:1103px;top:365px;width:61px;text-align:left;padding-left:13px">Еще</div>
<svg class="a" style="left:1151px;top:378px" width="6" height="4" viewBox="0 0 6 4"><path d="M0 0.5 H6 L3 3.5 Z" fill="#555"/></svg>

<!-- table -->
<div class="a" style="left:283px;top:400px;width:881px;height:317px;border:1px solid #a6a6a6;background:#fff"></div>
<div class="a" style="left:284px;top:401px;width:875px;height:30px;background:#f0f0f0"></div>
<div class="a" style="left:284px;top:431px;width:879px;height:1px;background:#c4c4c4"></div>
<div class="a" style="left:350px;top:401px;width:1px;height:30px;background:#d4d4d4"></div><div class="a" style="left:351px;top:401px;width:1px;height:30px;background:#fff"></div><div class="a" style="left:534px;top:401px;width:1px;height:30px;background:#d4d4d4"></div><div class="a" style="left:535px;top:401px;width:1px;height:30px;background:#fff"></div><div class="a" style="left:691px;top:401px;width:1px;height:30px;background:#d4d4d4"></div><div class="a" style="left:692px;top:401px;width:1px;height:30px;background:#fff"></div><div class="a" style="left:828px;top:401px;width:1px;height:30px;background:#d4d4d4"></div><div class="a" style="left:829px;top:401px;width:1px;height:30px;background:#fff"></div><div class="a" style="left:925px;top:401px;width:1px;height:30px;background:#d4d4d4"></div><div class="a" style="left:926px;top:401px;width:1px;height:30px;background:#fff"></div><div class="a" style="left:1042px;top:401px;width:1px;height:30px;background:#d4d4d4"></div><div class="a" style="left:1043px;top:401px;width:1px;height:30px;background:#fff"></div><div class="a" style="left:1159px;top:401px;width:1px;height:30px;background:#d4d4d4"></div><div class="a" style="left:1160px;top:401px;width:1px;height:30px;background:#fff"></div><div class="t" style="left:292px;top:407px;color:#4d4d4d">N</div><div class="t" style="left:359px;top:407px;color:#4d4d4d">Номенклатура</div><div class="t" style="left:543px;top:407px;color:#4d4d4d">Спецификация</div><div class="t" style="left:700px;top:407px;color:#4d4d4d">Количество</div><div class="t" style="left:837px;top:407px;color:#4d4d4d">Ед.</div><div class="t" style="left:934px;top:407px;color:#4d4d4d">Цена</div><div class="t" style="left:1051px;top:407px;color:#4d4d4d">Сумма</div><div class="a" style="left:284px;top:460px;width:879px;height:1px;background:#e4e4e4"></div><div class="t" style="left:290px;top:438px;width:52px;text-align:right;color:#333">1</div><svg class="a" style="left:360px;top:437px" width="15" height="18" viewBox="0 0 15 18"><ellipse cx="7" cy="15.6" rx="6.5" ry="1.4" fill="rgba(0,0,0,.16)"/><rect x="1.4" y="1.4" width="11.2" height="13.8" fill="#f3f9f9" stroke="#a9c1c1" stroke-width="1.1"/><path d="M4.2 3.9 H11 M4.2 5.9 H11 M4.2 7.9 H11 M4.2 9.9 H11 M4.2 11.9 H11 M4.2 13.9 H11" stroke="#cdd6f2" stroke-width="1"/><path d="M1.5 3.9 h1.5 M1.5 5.9 h1.5 M1.5 7.9 h1.5 M1.5 9.9 h1.5 M1.5 11.9 h1.5 M1.5 13.9 h1.5" stroke="#7f9a9a" stroke-width="0.9"/></svg><div class="t" style="left:383px;top:438px;color:#333">Бумага &quot;SvetoCopy&quot;</div><div class="t" style="left:700px;top:438px;width:120px;text-align:right;color:#333">5,000</div><div class="t" style="left:837px;top:438px;color:#333">шт</div><div class="t" style="left:930px;top:438px;width:104px;text-align:right;color:#333">500,00</div><div class="t" style="left:1046px;top:438px;width:104px;text-align:right;color:#333">2 500,00</div><div class="a" style="left:284px;top:489px;width:879px;height:1px;background:#e4e4e4"></div><div class="t" style="left:290px;top:467px;width:52px;text-align:right;color:#333">2</div><svg class="a" style="left:360px;top:466px" width="15" height="18" viewBox="0 0 15 18"><ellipse cx="7" cy="15.6" rx="6.5" ry="1.4" fill="rgba(0,0,0,.16)"/><rect x="1.4" y="1.4" width="11.2" height="13.8" fill="#f3f9f9" stroke="#a9c1c1" stroke-width="1.1"/><path d="M4.2 3.9 H11 M4.2 5.9 H11 M4.2 7.9 H11 M4.2 9.9 H11 M4.2 11.9 H11 M4.2 13.9 H11" stroke="#cdd6f2" stroke-width="1"/><path d="M1.5 3.9 h1.5 M1.5 5.9 h1.5 M1.5 7.9 h1.5 M1.5 9.9 h1.5 M1.5 11.9 h1.5 M1.5 13.9 h1.5" stroke="#7f9a9a" stroke-width="0.9"/></svg><div class="t" style="left:383px;top:467px;color:#333">Авторучка &quot;DOGMA&quot;</div><div class="t" style="left:700px;top:467px;width:120px;text-align:right;color:#333">10,000</div><div class="t" style="left:837px;top:467px;color:#333">шт</div><div class="t" style="left:930px;top:467px;width:104px;text-align:right;color:#333">20,00</div><div class="t" style="left:1046px;top:467px;width:104px;text-align:right;color:#333">200,00</div><div class="a" style="left:284px;top:518px;width:879px;height:1px;background:#e4e4e4"></div><div class="t" style="left:290px;top:496px;width:52px;text-align:right;color:#333">3</div><svg class="a" style="left:360px;top:495px" width="15" height="18" viewBox="0 0 15 18"><ellipse cx="7" cy="15.6" rx="6.5" ry="1.4" fill="rgba(0,0,0,.16)"/><rect x="1.4" y="1.4" width="11.2" height="13.8" fill="#f3f9f9" stroke="#a9c1c1" stroke-width="1.1"/><path d="M4.2 3.9 H11 M4.2 5.9 H11 M4.2 7.9 H11 M4.2 9.9 H11 M4.2 11.9 H11 M4.2 13.9 H11" stroke="#cdd6f2" stroke-width="1"/><path d="M1.5 3.9 h1.5 M1.5 5.9 h1.5 M1.5 7.9 h1.5 M1.5 9.9 h1.5 M1.5 11.9 h1.5 M1.5 13.9 h1.5" stroke="#7f9a9a" stroke-width="0.9"/></svg><div class="t" style="left:383px;top:496px;color:#333">Карандаш &quot;Erich Kra…</div><div class="t" style="left:700px;top:496px;width:120px;text-align:right;color:#333">10,000</div><div class="t" style="left:837px;top:496px;color:#333">шт</div><div class="t" style="left:930px;top:496px;width:104px;text-align:right;color:#333">15,00</div><div class="t" style="left:1046px;top:496px;width:104px;text-align:right;color:#333">150,00</div><div class="a" style="left:284px;top:547px;width:879px;height:1px;background:#e4e4e4"></div><div class="t" style="left:290px;top:525px;width:52px;text-align:right;color:#333">4</div><svg class="a" style="left:360px;top:524px" width="15" height="18" viewBox="0 0 15 18"><ellipse cx="7" cy="15.6" rx="6.5" ry="1.4" fill="rgba(0,0,0,.16)"/><rect x="1.4" y="1.4" width="11.2" height="13.8" fill="#f3f9f9" stroke="#a9c1c1" stroke-width="1.1"/><path d="M4.2 3.9 H11 M4.2 5.9 H11 M4.2 7.9 H11 M4.2 9.9 H11 M4.2 11.9 H11 M4.2 13.9 H11" stroke="#cdd6f2" stroke-width="1"/><path d="M1.5 3.9 h1.5 M1.5 5.9 h1.5 M1.5 7.9 h1.5 M1.5 9.9 h1.5 M1.5 11.9 h1.5 M1.5 13.9 h1.5" stroke="#7f9a9a" stroke-width="0.9"/></svg><div class="t" style="left:383px;top:525px;color:#333">Тетрадь 48</div><div class="t" style="left:700px;top:525px;width:120px;text-align:right;color:#333">25,000</div><div class="t" style="left:837px;top:525px;color:#333">шт</div><div class="t" style="left:930px;top:525px;width:104px;text-align:right;color:#333">45,00</div><div class="t" style="left:1046px;top:525px;width:104px;text-align:right;color:#333">1 125,00</div><div class="a" style="left:284px;top:548px;width:875px;height:28px;background:#c0c0c0"></div><div class="a" style="left:692px;top:548px;width:136px;height:28px;background:#808080"></div><div class="a" style="left:350px;top:548px;width:1px;height:28px;background:#fff"></div><div class="a" style="left:534px;top:548px;width:1px;height:28px;background:#fff"></div><div class="a" style="left:691px;top:548px;width:1px;height:28px;background:#fff"></div><div class="a" style="left:828px;top:548px;width:1px;height:28px;background:#fff"></div><div class="a" style="left:925px;top:548px;width:1px;height:28px;background:#fff"></div><div class="a" style="left:1042px;top:548px;width:1px;height:28px;background:#fff"></div><div class="a" style="left:1159px;top:548px;width:1px;height:28px;background:#fff"></div><div class="a" style="left:284px;top:576px;width:879px;height:1px;background:#fff"></div><div class="a" style="left:284px;top:576px;width:879px;height:1px;background:#e8e8e8"></div><div class="t" style="left:290px;top:554px;width:52px;text-align:right;color:#333">5</div><svg class="a" style="left:360px;top:553px" width="15" height="18" viewBox="0 0 15 18"><ellipse cx="7" cy="15.6" rx="6.5" ry="1.4" fill="rgba(0,0,0,.16)"/><rect x="1.4" y="1.4" width="11.2" height="13.8" fill="#f3f9f9" stroke="#a9c1c1" stroke-width="1.1"/><path d="M4.2 3.9 H11 M4.2 5.9 H11 M4.2 7.9 H11 M4.2 9.9 H11 M4.2 11.9 H11 M4.2 13.9 H11" stroke="#cdd6f2" stroke-width="1"/><path d="M1.5 3.9 h1.5 M1.5 5.9 h1.5 M1.5 7.9 h1.5 M1.5 9.9 h1.5 M1.5 11.9 h1.5 M1.5 13.9 h1.5" stroke="#7f9a9a" stroke-width="0.9"/></svg><div class="t" style="left:383px;top:554px;color:#333">Батарейка &quot;Duracell&quot;</div><div class="t" style="left:700px;top:554px;width:120px;text-align:right;color:#333">10,000</div><div class="t" style="left:837px;top:554px;color:#333">шт</div><div class="t" style="left:930px;top:554px;width:104px;text-align:right;color:#333">40,00</div><div class="t" style="left:1046px;top:554px;width:104px;text-align:right;color:#333">400,00</div><div class="a" style="left:284px;top:671px;width:879px;height:1px;background:#c4c4c4"></div><div class="a" style="left:285px;top:672px;width:873px;height:29px;background:#f2f2f2"></div><div class="a" style="left:350px;top:672px;width:1px;height:29px;background:#d4d4d4"></div><div class="a" style="left:351px;top:672px;width:1px;height:29px;background:#fff"></div><div class="a" style="left:534px;top:672px;width:1px;height:29px;background:#d4d4d4"></div><div class="a" style="left:535px;top:672px;width:1px;height:29px;background:#fff"></div><div class="a" style="left:691px;top:672px;width:1px;height:29px;background:#d4d4d4"></div><div class="a" style="left:692px;top:672px;width:1px;height:29px;background:#fff"></div><div class="a" style="left:828px;top:672px;width:1px;height:29px;background:#d4d4d4"></div><div class="a" style="left:829px;top:672px;width:1px;height:29px;background:#fff"></div><div class="a" style="left:925px;top:672px;width:1px;height:29px;background:#d4d4d4"></div><div class="a" style="left:926px;top:672px;width:1px;height:29px;background:#fff"></div><div class="a" style="left:1042px;top:672px;width:1px;height:29px;background:#d4d4d4"></div><div class="a" style="left:1043px;top:672px;width:1px;height:29px;background:#fff"></div><div class="a" style="left:1159px;top:672px;width:1px;height:29px;background:#d4d4d4"></div><div class="a" style="left:1160px;top:672px;width:1px;height:29px;background:#fff"></div><div class="t" style="left:700px;top:678px;width:120px;text-align:right;color:#333">60,000</div><svg class="a" style="left:292px;top:706px" width="5" height="6" viewBox="0 0 5 6"><path d="M5 0 V6 L0 3 Z" fill="#c4c4c4"/></svg><div class="a" style="left:307px;top:705px;width:833px;height:8px;border-radius:4px;background:#d4d4d4"></div><div class="a" style="left:307px;top:705px;width:536px;height:8px;border-radius:4px;background:#999"></div><svg class="a" style="left:1150px;top:706px" width="5" height="6" viewBox="0 0 5 6"><path d="M0 0 V6 L5 3 Z" fill="#555"/></svg>
<!-- footer -->
<div class="lbl" style="left:272px;top:741px">Комментарий:</div>
<div class="fld" style="left:387px;top:736px;width:457px;height:25px;border-color:#a8a8a8"></div>
<div class="lbl" style="left:854px;top:741px">Всего (итог):</div>
<div class="fld" style="left:934px;top:736px;width:131px;height:25px;border-color:#d4d4d4"></div>
<div class="t" style="left:942px;top:741px;width:119px;text-align:right;color:#333">4 375,00</div>
<div class="lbl" style="left:1075px;top:741px">руб.</div>
<svg class="a" style="left:274px;top:773px" width="11" height="11" viewBox="0 0 11 11"><circle cx="5.5" cy="3.2" r="2.6" fill="#e8b860" stroke="#333" stroke-width="0.6"/><path d="M0.5 11 V8.5 C0.5 7 2 6.3 3.5 6.3 L5.5 8 L7.5 6.3 C9 6.3 10.5 7 10.5 8.5 V11 Z" fill="#3590c0"/></svg>
<div class="t" style="left:304px;top:772px"><span style="color:#2850c0;text-decoration:underline;text-underline-offset:1px">Изменён: 04.07.2023 17:24:45 Администратор</span></div>
<svg class="a" style="left:990px;top:770px" width="24" height="20" viewBox="990 770 24 20"><rect x="998.5" y="775.5" width="12" height="9" fill="#f6f6f6" stroke="#8a9ab2" stroke-width="1"/><rect x="1001" y="778" width="7" height="1" fill="#8c8c8c"/><rect x="1001" y="780" width="7" height="1" fill="#8c8c8c"/><rect x="1001" y="782" width="7" height="1" fill="#8c8c8c"/></svg>
<div class="t" style="left:1025px;top:772px;color:#a8341c">Не проведен</div>

<!-- dropdown menu -->
<div class="a" style="left:688px;top:147px;width:250px;height:182px;background:#fff;border:1px solid #a0a0a0;box-shadow:2px 3px 4px rgba(0,0,0,.32)"></div>
<div class="a" style="left:690px;top:239px;width:246px;height:29px;background:#000"></div>
<div class="t" style="left:733px;top:155px;color:#4d4d4d">Доверенность</div>
<div class="t" style="left:733px;top:185px;color:#4d4d4d">Задание</div>
<div class="t" style="left:733px;top:215px;color:#4d4d4d">Планирование бюджета</div>
<div class="t" style="left:733px;top:245px;color:#d2d2d2">Поступление</div>
<div class="t" style="left:733px;top:275px;color:#4d4d4d">Проект</div>
<div class="t" style="left:733px;top:305px;color:#4d4d4d">Учет денежных средств</div>



<!-- FORM4 -->
</body></html>
